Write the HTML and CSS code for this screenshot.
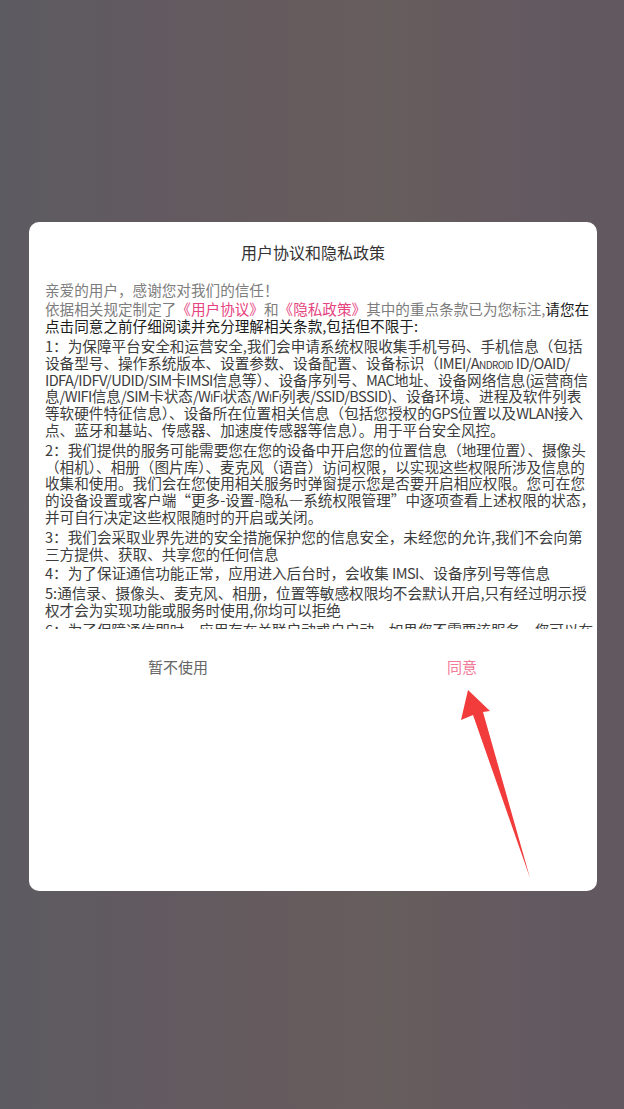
FILE: index.html
```html
<!DOCTYPE html>
<html lang="zh-CN">
<head>
<meta charset="utf-8">
<title>用户协议和隐私政策</title>
<link rel="stylesheet" href="styles.css">
</head>
<body>
<div class="screen">
  <div class="dialog">
    <div class="title">用户协议和隐私政策</div>
    <div class="content">
      <p class="intro">亲爱的用户，感谢您对我们的信任！</p>
      <p class="intro">依据相关规定制定了<span class="link">《用户协议》</span>和<span class="link">《隐私政策》</span>其中的重点条款已为您标注,<span class="strong">请您在<br>点击同意之前仔细阅读并充分理解相关条款,包括但不限于:</span></p>
      <p>1：为保障平台安全和运营安全,我们会申请系统权限收集手机号码、手机信息（包括<br>设备型号、操作系统版本、设置参数、设备配置、设备标识（<span class="lat">IMEI/<span class="sc">Android</span> ID/OAID/</span><br><span class="lat">IDFA/IDFV/UDID/SIM</span>卡<span class="lat">IMSI</span>信息等）、设备序列号、<span class="lat">MAC</span>地址、设备网络信息<span class="lat">(</span>运营商信<br>息<span class="lat">/WIFI</span>信息<span class="lat">/SIM</span>卡状态<span class="lat">/<span class="sc">WiFi</span></span>状态<span class="lat">/<span class="sc">WiFi</span></span>列表<span class="lat">/SSID/BSSID)</span>、设备环境、进程及软件列表<br>等软硬件特征信息）、设备所在位置相关信息（包括您授权的<span class="lat">GPS</span>位置以及<span class="lat">WLAN</span>接入<br>点、蓝牙和基站、传感器、加速度传感器等信息）。用于平台安全风控。</p>
      <p>2：我们提供的服务可能需要您在您的设备中开启您的位置信息（地理位置）、摄像头<br>（相机）、相册（图片库）、麦克风（语音）访问权限，以实现这些权限所涉及信息的<br>收集和使用。我们会在您使用相关服务时弹窗提示您是否要开启相应权限。您可在您<br>的设备设置或客户端“更多-设置-隐私—系统权限管理”中逐项查看上述权限的状态，<br>并可自行决定这些权限随时的开启或关闭。</p>
      <p>3：我们会采取业界先进的安全措施保护您的信息安全，未经您的允许,我们不会向第<br>三方提供、获取、共享您的任何信息</p>
      <p>4：为了保证通信功能正常，应用进入后台时，会收集 <span class="lat">IMSI</span>、设备序列号等信息</p>
      <p>5:通信录、摄像头、麦克风、相册，位置等敏感权限均不会默认开启,只有经过明示授<br>权才会为实现功能或服务时使用,你均可以拒绝</p>
      <p>6：为了保障通信即时，应用存在关联启动或自启动，如果您不需要该服务，您可以在<br>手机设置中关闭相关权限。</p>
    </div>
    <div class="actions">
      <span class="btn btn-cancel">暂不使用</span>
      <span class="btn btn-ok">同意</span>
    </div>
  </div>
  <svg class="arrow" width="624" height="1109" viewBox="0 0 624 1109">
    <polygon points="468,690 490,711 483,712 530,878 473,715 461,720" fill="#f23b3b"/>
  </svg>
</div>
</body>
</html>
```

FILE: styles.css
```css
html, body {
  margin: 0;
  padding: 0;
}
body {
  width: 624px;
  height: 1109px;
  overflow: hidden;
  font-family: "Noto Sans CJK SC", "Noto Sans", sans-serif;
}
.screen {
  position: relative;
  width: 624px;
  height: 1109px;
  padding-top: 222px;
  box-sizing: border-box;
  background: linear-gradient(to right, #5c5b61 0%, #625a60 25%, #665c5e 50%, #665d5d 62%, #635960 85%, #615860 100%);
}
.dialog {
  margin-left: 29px;
  width: 568px;
  height: 669px;
  background: #ffffff;
  border-radius: 10px;
  display: flex;
  flex-direction: column;
}
.title {
  padding-top: 20px;
  height: 20px;
  line-height: 20px;
  font-size: 16px;
  color: #333333;
  text-align: center;
  padding-left: 0;
}
.content {
  margin-top: 19.6px;
  height: 347px;
  overflow: hidden;
  padding: 0 6px 0 16px;
  font-size: 14.6px;
  line-height: 16.8px;
  color: #3d3d3d;
  white-space: nowrap;
}
.content p {
  margin: 0 0 3px 0;
}
.content p.intro {
  color: #7d7d7d;
}
.link {
  color: #e5447e;
}
.strong {
  color: #1c1c1c;
}
.lat {
  letter-spacing: -0.6px;
}
.sc {
  font-variant: small-caps;
}
.actions {
  margin-top: 18px;
  height: 40px;
  display: flex;
  justify-content: space-between;
  align-items: center;
  padding: 0 120px 0 119px;
}
.btn {
  font-size: 15px;
  line-height: 40px;
}
.btn-cancel {
  color: #666666;
}
.btn-ok {
  color: #f27a98;
}
.arrow {
  position: absolute;
  left: 0;
  top: 0;
  pointer-events: none;
}
```
